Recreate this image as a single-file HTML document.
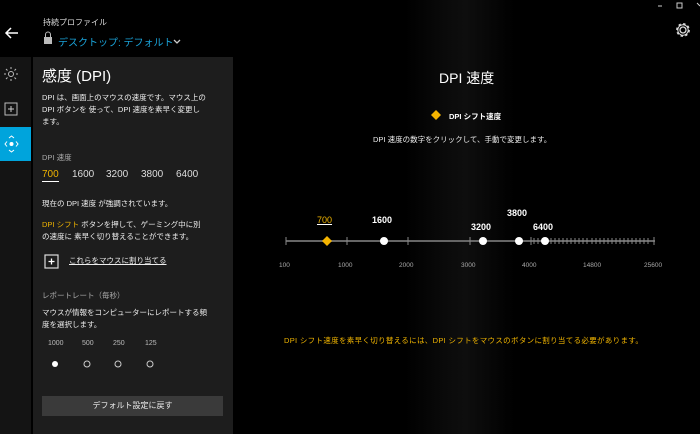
<!DOCTYPE html><html><head><meta charset="utf-8"><style>
*{margin:0;padding:0;box-sizing:border-box}
body{width:700px;height:434px;background:#000;color:#fff;font-family:"Liberation Sans","Noto Sans CJK JP",sans-serif;position:relative;overflow:hidden;font-size:8px}
.a{position:absolute;white-space:nowrap}
</style></head><body>
<div class="a" style="left:405px;top:0;width:110px;height:434px;background:linear-gradient(90deg,#000,#0b0b0b 40%,#0e0e0e 55%,#000)"></div>
<div class="a" style="left:0;top:57px;width:31px;height:377px;background:#141414"></div>
<div class="a" style="left:0;top:127px;width:31px;height:34px;background:#00a4dc"></div>
<div class="a" style="left:33px;top:57px;width:200px;height:377px;background:#1d1d1d"></div>
<svg class="a" style="left:0;top:0" width="700" height="434">
<path d="M18 33H6M11 28l-5 5 5 5" stroke="#fff" stroke-width="1.5" fill="none"/>
<circle cx="11" cy="74" r="2.5" stroke="#bbb" fill="none"/>
<g stroke="#bbb"><path d="M11 67v2M11 79v2M4 74h2M16 74h2M6 69l1.5 1.5M16 69l-1.5 1.5M6 79l1.5-1.5M16 79l-1.5-1.5"/></g>
<rect x="5" y="103" width="12" height="12" stroke="#bbb" fill="none"/><path d="M11 106v6M8 109h6" stroke="#ccc"/>
<circle cx="11.5" cy="144" r="2" fill="#fff"/><path d="M9 138l2.5-2 2.5 2M9 150l2.5 2 2.5-2M7 141.5l-2 2.5 2 2.5M16 141.5l2 2.5-2 2.5" stroke="#fff" fill="none"/>
<rect x="44" y="37" width="8" height="7" fill="#bbb"/><path d="M45.5 37v-2.5a2.5 2.5 0 0 1 5 0V37" stroke="#bbb" fill="none"/>
<path d="M174 40l3 3 3-3" stroke="#ccc" stroke-width="1.3" fill="none"/>
<path d="M658 6h4M677 3h5v5h-5z" stroke="#ccc" fill="none"/><path d="M697 3l3 3" stroke="#ccc"/>
<circle cx="683" cy="30" r="3" stroke="#ddd" stroke-width="1.3" fill="none"/><circle cx="683" cy="30" r="6" stroke="#ddd" stroke-width="1.8" stroke-dasharray="2.4 2.3" fill="none"/><circle cx="683" cy="30" r="5.2" stroke="#ddd" stroke-width="1" fill="none"/>
<rect x="45" y="255" width="13" height="13" stroke="#ddd" fill="none" stroke-width="1.2"/><path d="M51.5 258.5v6M48.5 261.5h6" stroke="#fff" stroke-width="1.3"/>
<circle cx="55" cy="364" r="3" fill="#fff"/><circle cx="87" cy="364" r="3" stroke="#ccc" fill="none"/><circle cx="118" cy="364" r="3" stroke="#ccc" fill="none"/><circle cx="150" cy="364" r="3" stroke="#ccc" fill="none"/>
<path d="M436 110l5 5-5 5-5-5z" fill="#f5b400"/>
<line x1="286" y1="241" x2="655" y2="241" stroke="#666" stroke-width="2"/>
<g stroke="#888"><path d="M286 237v8M347 237v8M408 237v8M470 237v8M531 237v8"/>
<path d="M534 238v6M538 238v6M551 238v6M555 238v6M559 238v6M563 238v6M567 238v6M571 238v6M575 238v6M579 238v6M583 238v6M587 238v6M592 238v6M596 238v6M600 238v6M604 238v6M608 238v6M612 238v6M616 238v6M620 238v6M624 238v6M628 238v6M632 238v6M636 238v6M640 238v6M644 238v6M648 238v6M654 237v8"/></g>
<path d="M327 236l5 5-5 5-5-5z" fill="#f5b400"/>
<circle cx="384" cy="241" r="4" fill="#fff"/><circle cx="483" cy="241" r="4" fill="#fff"/><circle cx="519" cy="241" r="4" fill="#fff"/><circle cx="545" cy="241" r="4" fill="#fff"/>
</svg>
<div class="a" style="left:43px;top:17px;font-size:8px;color:#ddd">持続プロファイル</div>
<div class="a" style="left:58px;top:34px;font-size:10px;color:#1aa3d9">デスクトップ: デフォルト</div>
<div class="a" style="left:42px;top:65px;font-size:15px">感度 (DPI)</div>
<div class="a" style="left:42px;top:92px;font-size:7.5px;line-height:12px;color:#eee">DPI は、画面上のマウスの速度です。マウス上の<br>DPI ボタンを 使って、DPI 速度を素早く変更し<br>ます。</div>
<div class="a" style="left:42px;top:152px;font-size:7.5px;color:#aaa">DPI 速度</div>
<div class="a" style="left:42px;top:169px;font-size:10px;color:#ddd"><span style="color:#f0b400;border-bottom:1.5px solid #fff;padding-bottom:1px">700</span></div>
<div class="a" style="left:72px;top:169px;font-size:10px;color:#ddd">1600</div>
<div class="a" style="left:106px;top:169px;font-size:10px;color:#ddd">3200</div>
<div class="a" style="left:141px;top:169px;font-size:10px;color:#ddd">3800</div>
<div class="a" style="left:176px;top:169px;font-size:10px;color:#ddd">6400</div>
<div class="a" style="left:42px;top:198px;font-size:7.5px;color:#eee">現在の DPI 速度 が強調されています。</div>
<div class="a" style="left:42px;top:219px;font-size:7.5px;line-height:12px;color:#eee"><span style="color:#f0b400">DPI シフト</span> ボタンを押して、ゲーミング中に別<br>の速度に 素早く切り替えることができます。</div>
<div class="a" style="left:69px;top:255px;font-size:7.5px;color:#eee;text-decoration:underline">これらをマウスに割り当てる</div>
<div class="a" style="left:42px;top:290px;font-size:7.5px;color:#aaa">レポートレート（毎秒）</div>
<div class="a" style="left:42px;top:307px;font-size:7.5px;line-height:12px;color:#eee">マウスが情報をコンピューターにレポートする頻<br>度を選択します。</div>
<div class="a" style="left:48px;top:340px;font-size:7px;color:#bbb">1000</div>
<div class="a" style="left:82px;top:340px;font-size:7px;color:#bbb">500</div>
<div class="a" style="left:113px;top:340px;font-size:7px;color:#bbb">250</div>
<div class="a" style="left:145px;top:340px;font-size:7px;color:#bbb">125</div>
<div class="a" style="left:42px;top:396px;width:181px;height:20px;background:#3a3a3a;text-align:center;line-height:20px;font-size:8px;color:#eee">デフォルト設定に戻す</div>
<div class="a" style="left:439px;top:68px;font-size:14px">DPI 速度</div>
<div class="a" style="left:449px;top:111px;font-size:7.5px;font-weight:bold">DPI シフト速度</div>
<div class="a" style="left:373px;top:134px;font-size:7.5px;color:#eee">DPI 速度の数字をクリックして、手動で変更します。</div>
<div class="a" style="left:317px;top:215px;font-size:9px;color:#f0b400;text-decoration:underline;text-decoration-color:#fff">700</div>
<div class="a" style="left:372px;top:215px;font-size:9px;font-weight:bold">1600</div>
<div class="a" style="left:471px;top:222px;font-size:9px;font-weight:bold">3200</div>
<div class="a" style="left:507px;top:208px;font-size:9px;font-weight:bold">3800</div>
<div class="a" style="left:533px;top:222px;font-size:9px;font-weight:bold">6400</div>
<div class="a" style="left:279px;top:262px;font-size:6.5px;color:#aaa">100</div>
<div class="a" style="left:338px;top:262px;font-size:6.5px;color:#aaa">1000</div>
<div class="a" style="left:399px;top:262px;font-size:6.5px;color:#aaa">2000</div>
<div class="a" style="left:461px;top:262px;font-size:6.5px;color:#aaa">3000</div>
<div class="a" style="left:522px;top:262px;font-size:6.5px;color:#aaa">4000</div>
<div class="a" style="left:583px;top:262px;font-size:6.5px;color:#aaa">14800</div>
<div class="a" style="left:644px;top:262px;font-size:6.5px;color:#aaa">25600</div>
<div class="a" style="left:284px;top:335px;font-size:7.5px;letter-spacing:0.32px;color:#f0b400">DPI シフト速度を素早く切り替えるには、DPI シフトをマウスのボタンに割り当てる必要があります。</div>
</body></html>
